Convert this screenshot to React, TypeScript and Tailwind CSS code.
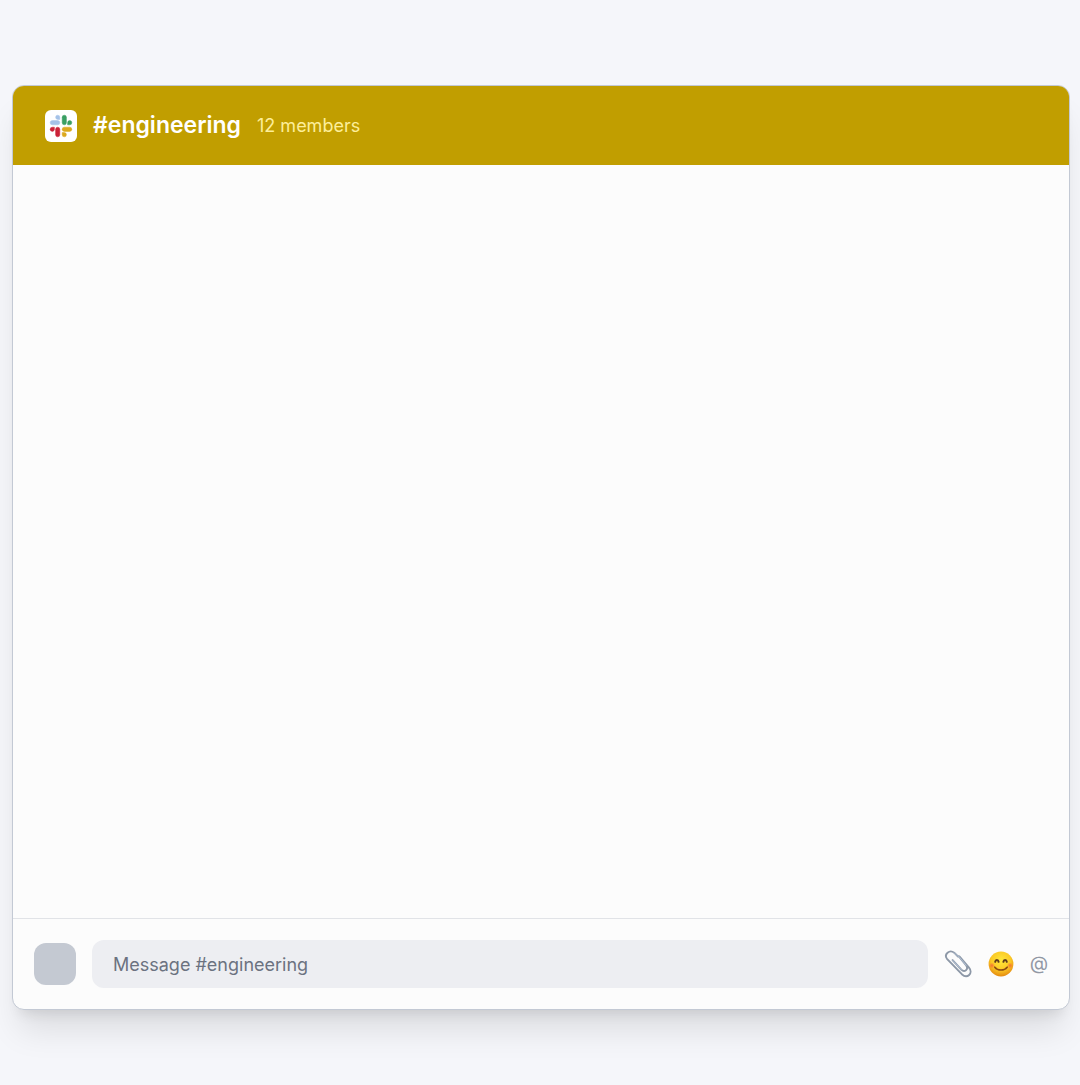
const channel = { name: "#engineering", members: 12 };

function SlackLogo() {
  return (
    <svg viewBox="0 0 24 24" className="size-6" strokeWidth="0.5" aria-hidden="true">
      <g fill="#a5c2e8" stroke="#a5c2e8">
        <rect x="1.2" y="6.6" width="9.6" height="4.2" rx="2.1" />
        <path d="M8.7 1.2a2.1 2.1 0 0 1 2.1 2.1v2.1H8.7a2.1 2.1 0 0 1 0-4.2z" />
      </g>
      <g fill="#3a9f62" stroke="#3a9f62">
        <rect x="13.2" y="1.2" width="4.2" height="9.6" rx="2.1" />
        <path d="M18.6 10.8V8.7a2.1 2.1 0 1 1 2.1 2.1z" />
      </g>
      <g fill="#dba91f" stroke="#dba91f">
        <rect x="13.2" y="13.2" width="9.6" height="4.2" rx="2.1" />
        <path d="M13.2 18.6h2.1a2.1 2.1 0 1 1-2.1 2.1z" />
      </g>
      <g fill="#cb2238" stroke="#cb2238">
        <rect x="6.6" y="13.2" width="4.2" height="9.6" rx="2.1" />
        <path d="M5.4 13.2v2.1a2.1 2.1 0 1 1-2.1-2.1z" />
      </g>
    </svg>
  );
}

function PaperclipIcon() {
  return (
    <svg viewBox="0 0 28 28" className="size-7" fill="none" strokeLinecap="round" aria-hidden="true">
      <path
        d="M14 6.5 L10.2 2.7 C5.5 -.8 -.4 4.2 3 8.8 L17.8 24.2 C23.2 29.4 29.6 23.2 25 17.7 L15.6 6.6 M14.7 6.2 L22.2 15.4 C25 19.6 20.4 22.8 17.3 19.7 L8.6 10.1"
        stroke="#8d98a7"
        strokeWidth="1.9"
      />
      <path
        d="M10.2 2.7 L14 6.5 M14.7 6.2 L22.2 15.4 M8.6 10.1 L17.3 19.7"
        stroke="#b7c9e0"
        strokeWidth="0.8"
      />
    </svg>
  );
}

function SmileIcon() {
  return (
    <svg viewBox="0 0 26 26" className="size-[26px]" fill="none" strokeLinecap="round" aria-hidden="true">
      <defs>
        <radialGradient id="face" cx="50%" cy="35%" r="65%">
          <stop offset="0" stopColor="#ffe83b" />
          <stop offset="0.6" stopColor="#fbc925" />
          <stop offset="1" stopColor="#e58a10" />
        </radialGradient>
        <radialGradient id="cheek">
          <stop offset="0" stopColor="#f4573a" stopOpacity="0.75" />
          <stop offset="1" stopColor="#f4573a" stopOpacity="0" />
        </radialGradient>
      </defs>
      <circle cx="13" cy="13" r="12.4" fill="url(#face)" />
      <circle cx="4" cy="14.5" r="3" fill="url(#cheek)" />
      <circle cx="22" cy="14.5" r="3" fill="url(#cheek)" />
      <path
        d="M7.2 10.8 C7.5 8.4 10.3 8.4 10.6 10.8 M15.4 10.8 C15.7 8.4 18.5 8.4 18.8 10.8"
        stroke="#5e3c1c"
        strokeWidth="2"
      />
      <path d="M6.8 16.2 C9.8 20 16.2 20 19.2 16.2" stroke="#8b4a12" strokeWidth="1.6" />
    </svg>
  );
}

function ChannelHeader() {
  return (
    <header className="flex h-[79px] shrink-0 items-center gap-4 bg-[#c19e00] px-8">
      <span className="flex size-8 items-center justify-center rounded-md bg-white">
        <SlackLogo />
      </span>
      <h1 className="text-[23px] font-semibold text-white">{channel.name}</h1>
      <span className="text-lg text-[#fdee9a]">{channel.members} members</span>
    </header>
  );
}

function Composer() {
  return (
    <form
      className="flex shrink-0 items-center gap-4 border-t border-[#e1e3e7] p-[21px]"
      onSubmit={(e) => e.preventDefault()}
    >
      <div className="size-[42px] shrink-0 rounded-xl bg-[#c4c9d2]" />
      <input
        type="text"
        aria-label={`Message ${channel.name}`}
        placeholder={`Message ${channel.name}`}
        className="h-12 min-w-0 flex-1 rounded-xl bg-[#edeef2] px-[21px] text-lg text-[#6b7280] outline-none placeholder:text-[#6b7280]"
      />
      <div className="flex items-center gap-4 text-[#9298a4]">
        <button type="button" aria-label="Attach a file">
          <PaperclipIcon />
        </button>
        <button type="button" aria-label="Add emoji">
          <SmileIcon />
        </button>
        <button type="button" aria-label="Mention someone" className="text-[19px]">
          @
        </button>
      </div>
    </form>
  );
}

export default function App() {
  return (
    <div className="flex min-h-screen flex-col bg-[#f5f6fa] pt-[85px] pr-[10px] pb-[75px] pl-3 font-['Inter',sans-serif]">
      <main className="flex flex-1 flex-col overflow-hidden rounded-xl border border-[#c3c9d4] bg-[#fcfcfc] shadow-[0_27px_33px_-7px_rgba(0,0,0,0.1),0_11px_13px_-8px_rgba(0,0,0,0.1)]">
        <ChannelHeader />
        <section aria-label="Messages" className="flex-1" />
        <Composer />
      </main>
    </div>
  );
}
